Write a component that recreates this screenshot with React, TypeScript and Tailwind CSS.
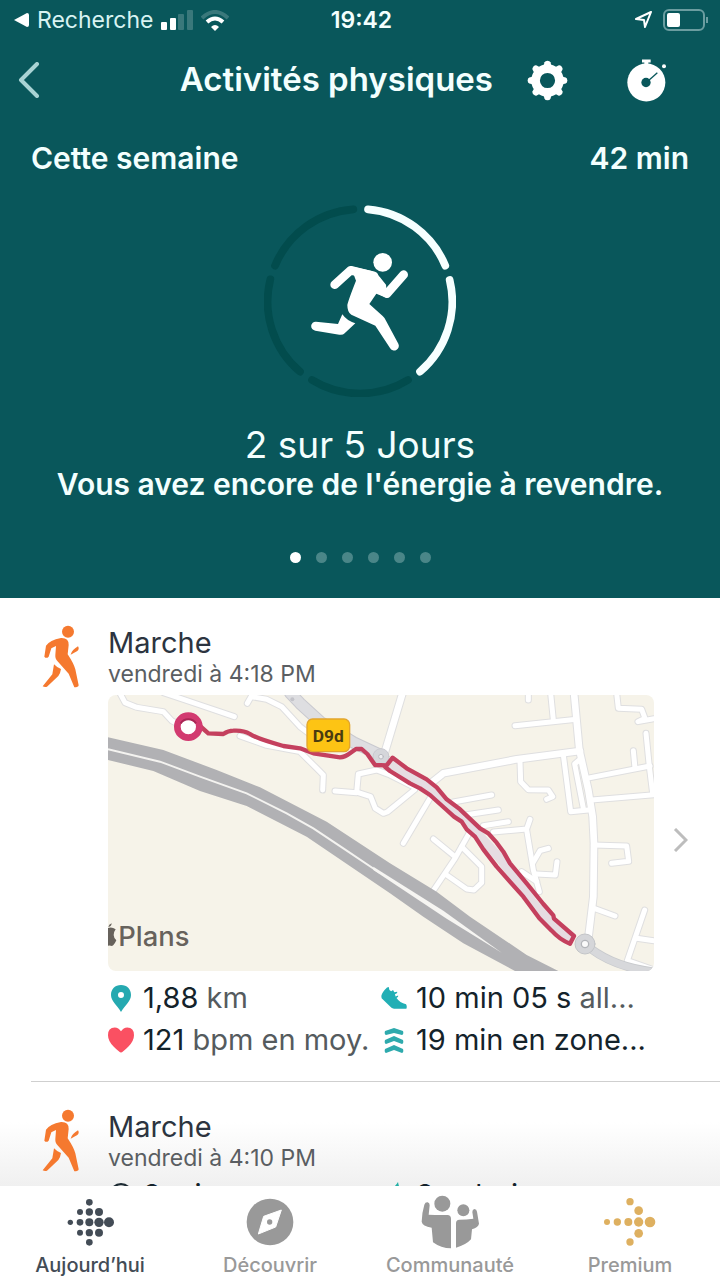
import type { ReactNode } from 'react'

const segments = [
  { d: 'M354 58A276 276 0 0 1 586 227', done: true },
  { d: 'M599 270A276 276 0 0 1 510 545', done: true },
  { d: 'M474 570A276 276 0 0 1 186 570', done: false },
  { d: 'M150 545A276 276 0 0 1 61 268', done: false },
  { d: 'M75 227A276 276 0 0 1 310 58', done: false }
]

const streets = [
  'M60 10L75 38L110 52L190 65L215 92L240 105',
  'M190 8L300 45L403 80',
  'M460 8L442 40',
  'M455 20L500 28L545 50L600 110L640 140',
  'M420 138L500 166L600 185L650 235L670 255L668 300',
  'M705 303L770 308L775 252L830 240L870 255L940 290',
  'M775 308L812 320L826 355L850 370L862 366L945 298',
  'M1245 107L1430 88',
  'M1352 10L1360 90',
  'M1285 10V30',
  'M1550 10L1555 55L1625 58L1635 85L1614 95L1662 86',
  'M1638 130L1648 230L1658 310',
  'M1460 265L1650 228',
  'M1600 182L1605 235',
  'M1475 330L1662 314',
  'M1390 195L1412 365L1465 360',
  'M1440 208L1424 222L1450 355',
  'M1260 215L1262 275L1285 299L1345 300L1358 320L1340 328',
  'M1060 336L1175 315',
  'M1100 374L1195 360',
  'M1150 407L1225 395',
  'M1180 426L1280 417L1290 388',
  'M1280 420L1300 540L1318 605',
  'M1298 520L1320 482L1345 475',
  'M1310 552L1366 555L1371 515',
  'M1265 545L1310 575',
  'M990 325L910 460',
  'M1000 447L1065 500',
  'M1110 425L1065 505L1000 602',
  'M1085 470L1145 530V578L1122 600L1100 597L1040 555',
  'M1480 465L1580 468L1586 514L1535 520',
  'M1482 655L1545 678',
  'M1634 660L1582 812L1662 840',
  'M1610 745L1662 752'
]

const avenues = [
  'M908 8L855 185',
  'M980 290L1030 250L1250 208L1440 183',
  'M1422 8L1438 180L1465 300L1478 380L1482 460L1480 620L1465 745'
]

const route =
  'M300 108L325 130L370 132Q385 122 400 122Q430 120 450 132Q470 146 550 168L600 175L640 190L720 202Q735 201 752 188L768 177L785 177L802 192L825 225L860 226L878 203L920 235L980 268L1010 292L1040 328L1080 358L1140 415L1165 430L1190 458L1210 485L1230 520L1280 580L1330 642L1360 676L1362 686L1422 738L1410 761Q1380 750 1355 722L1318 685L1270 620L1190 530L1150 478L1125 440L1100 418L1085 395L1062 380L1040 360L990 315L960 295L930 280L870 243L850 226'

const shieldRoad = 'M570 8L600 40L660 95L760 157L845 197'
const exitRoad = 'M1470 775Q1550 835 1670 846'

function RouteMap() {
  return (
    <svg viewBox="24 15 1638 828" role="img" aria-label="Plans" className="block w-full rounded-lg bg-[#f6f3e9]">
      <g fill="none" strokeLinecap="round" strokeLinejoin="round">
        <g stroke="#dfdfe0">
          {streets.map((d) => <path key={d} d={d} strokeWidth="21" />)}
          {avenues.map((d) => <path key={d} d={d} strokeWidth="26" />)}
        </g>
        <path d={shieldRoad} stroke="#c9c9cf" strokeWidth="37" />
        <g stroke="#fff">
          {streets.map((d) => <path key={d} d={d} strokeWidth="15" />)}
          {avenues.map((d) => <path key={d} d={d} strokeWidth="20" />)}
        </g>
        <path d={shieldRoad} stroke="#dedee1" strokeWidth="31" />
        <circle cx="843" cy="200" r="24" fill="#d5d6da" stroke="#c9c9cf" strokeWidth="3" />
        <circle cx="843" cy="200" r="7" fill="#eeeef0" stroke="#b9bac0" strokeWidth="3" />
        <circle cx="577" cy="28" r="6" fill="#c3c3c9" />
        <path d={exitRoad} stroke="#c8cacd" strokeWidth="26" />
        <path d={exitRoad} stroke="#d7d8db" strokeWidth="21" />
        <circle cx="1455" cy="762" r="30" fill="#d5d6d9" stroke="#c3c5c8" strokeWidth="3" />
        <circle cx="1455" cy="762" r="11" fill="#fafafa" stroke="#b4b6ba" strokeWidth="4" />
        <path d="M875 225L980 292L1100 395L1200 505L1300 640L1405 745" stroke="#e6dde2" strokeWidth="28" />
      </g>
      <path
        d="M24 142L190 180L350 240L480 292L680 395L870 520L1010 605L1110 680L1280 795L1375 843H1245L1090 760L970 680L870 610L620 440L440 348L300 303L160 243L24 210Z"
        fill="#b1b1b4"
      />
      <path
        d="M24 178L180 215L300 260L440 310L560 370L640 415L730 475L840 549"
        fill="none"
        stroke="#f4f3f0"
        strokeWidth="6"
      />
      <path d="M820 530L1030 662L1205 788L1040 686L820 540Z" fill="#f6f5f2" />
      <path d={route} fill="none" stroke="#c4405e" strokeWidth="13" strokeLinejoin="round" />
      <circle cx="265" cy="110" r="33" fill="#fff" stroke="#d23a70" strokeWidth="20" />
      <path d="M242 100A28 28 0 0 1 288 100" fill="none" stroke="#a92655" strokeWidth="6" />
      <rect x="621" y="87" width="128" height="98" rx="17" fill="#fdc414" stroke="#e2a52c" strokeWidth="4" />
      <text
        x="685"
        y="156"
        textAnchor="middle"
        fontSize="52"
        fontWeight="700"
        className="fill-[#4a3c10] font-['Liberation_Sans_Narrow','Roboto',sans-serif]"
      >
        D9d
      </text>
      <g fill="#67625c">
        <path d="M24 714Q36 710 47 718Q41 726 41 735Q42 747 49 751Q43 765 36 768Q30 766 24 767Z" />
        <path d="M25 711Q26 703 35 700Q35 709 25 711Z" />
        <text x="55" y="767" fontSize="82" fontWeight="500" className="font-['Inter',sans-serif]">
          Plans
        </text>
      </g>
    </svg>
  )
}

function Walker() {
  return (
    <svg viewBox="127 75 114 189" className="h-[63px] w-[38px] shrink-0 fill-[#f5792f]" aria-hidden="true">
      <circle cx="205" cy="95" r="18" />
      <path d="M139 137Q150 121 184 114Q208 113 207 135L204 163Q222 190 227 208L237 256Q236 262 224 262L207 221L175 185Q166 178 167 165L169 138L155 145L147 170Q140 177 134 170Z" />
      <path d="M235 139Q240 147 233 153L213 164Q216 150 235 139Z" />
      <path d="M163 193Q171 202 184 207Q182 221 176 228L142 260Q136 263 129 259L158 223Z" />
    </svg>
  )
}

function Pin() {
  return (
    <svg viewBox="0 0 20 27" className="h-[27px] w-5 fill-[#25a9b0]" aria-hidden="true">
      <path fillRule="evenodd" d="M10 0C4 0 0 4 0 10C0 16 6 20 10 27C14 20 20 16 20 10C20 4 16 0 10 0ZM10 7a3 3 0 1 1 0 6a3 3 0 1 1 0-6Z" />
    </svg>
  )
}

function Heart() {
  return (
    <svg viewBox="0 0 27 26" className="h-[26px] w-[27px] fill-[#fa5062]" aria-hidden="true">
      <path d="M13.500 26Q12 26 6 20Q0 14 0 8Q0 0 7 0Q11 0 13.500 4Q16 0 20 0Q27 0 27 8Q27 14 21 20Q15 26 13.500 26Z" />
    </svg>
  )
}

function Shoe() {
  return (
    <svg viewBox="63 56 82 72" className="h-6 w-[27px] fill-[#22afb5]" aria-hidden="true">
      <path d="M64 86Q66 74 82 59L88 57Q87 68 95 71L101 67L105 74L114 72V76L107 80L109 87L117 84V88L112 92Q122 107 142 112Q146 118 143 126H104Q97 125 91 118L65 93Z" />
    </svg>
  )
}

function Zone() {
  return (
    <svg viewBox="0 0 20 25" className="h-[25px] w-5 fill-[#2eaaad]" aria-hidden="true">
      <path d="M1 3L10 0L19 3Q20 6 18 7L10 5L2 7Q0 6 1 3Z" />
      <path d="M1 12L10 8L19 12Q20 15 18 16L10 13L2 16Q0 15 1 12Z" />
      <path d="M1 21L10 17L19 21Q20 24 18 25L10 22L2 25Q0 24 1 21Z" />
    </svg>
  )
}

function Clock() {
  return (
    <svg viewBox="0 0 24 24" className="size-[26px] fill-none stroke-[#1d2b33] stroke-2" aria-hidden="true">
      <circle cx="12" cy="12" r="10" />
      <path d="M12 6v6l4 3" />
    </svg>
  )
}

function Flame() {
  return (
    <svg viewBox="0 0 24 26" className="h-[26px] w-6 fill-[#22afa5]" aria-hidden="true">
      <path d="M16 0Q17 6 20 10Q23 14 21 19Q18 26 12 26Q5 26 3 19Q2 13 7 9Q13 5 16 0Z" />
    </svg>
  )
}

function Stat({ icon, value, unit }: { icon: ReactNode; value: string; unit?: string }) {
  return (
    <li className="flex h-[42px] items-center gap-[9px] whitespace-nowrap text-[29px] text-[#14232b]">
      <span className="flex w-[26px] shrink-0 justify-center">{icon}</span>
      <span>
        {value}
        {unit && <span className="text-[#555b5e]"> {unit}</span>}
      </span>
    </li>
  )
}

function Activity({ date, map, children }: { date: string; map?: boolean; children: ReactNode }) {
  return (
    <li className="ml-[31px] flex border-b border-[#cfcfcf] pb-5 pl-[11px] pt-[27px]">
      <Walker />
      <div className="ml-7 min-w-0 flex-1">
        <h2 className="text-[29px] leading-[36px] text-[#2c3440]">Marche</h2>
        <p className="text-[23px] leading-[26px] text-[#5a5e62]">{date}</p>
        {map && (
          <div className="mt-2 mb-[6px]">
            <RouteMap />
          </div>
        )}
        <ul className="mt-[3px] grid grid-cols-2">{children}</ul>
      </div>
      <a href="#" aria-label={date} className="flex w-[66px] shrink-0 items-center pb-[6px] pl-[19px]">
        {map && (
          <svg viewBox="0 0 15 24" className="h-6 w-[15px] fill-none stroke-[#bdbdbd] stroke-3" aria-hidden="true">
            <path d="M2 1L13 12L2 23" />
          </svg>
        )}
      </a>
    </li>
  )
}

const todayDots = [
  [267, 337, 10], [239, 366, 9], [267, 366, 11], [296, 366, 12],
  [210, 397, 8], [239, 397, 10], [267, 397, 12], [296, 397, 14], [326, 397, 15],
  [239, 428, 9], [267, 428, 11], [296, 428, 12], [267, 457, 10]
]

const premiumDots = [
  [808, 336, 11], [834, 363, 13], [739, 397, 9], [770, 397, 11], [803, 397, 12],
  [834, 397, 14], [868, 397, 16], [834, 431, 13], [808, 457, 11]
]

const tabs = [
  {
    label: 'Aujourd’hui',
    color: 'text-[#434c56]',
    icon: (
      <svg viewBox="197 324 144 144" className="size-12 fill-current" aria-hidden="true">
        {todayDots.map(([x, y, r]) => <circle key={`${x}-${y}`} cx={x} cy={y} r={r} />)}
      </svg>
    )
  },
  {
    label: 'Découvrir',
    color: 'text-[#999999]',
    icon: (
      <svg viewBox="738 325 144 144" className="size-12 fill-current" aria-hidden="true">
        <circle cx="810" cy="397" r="70" />
        <path d="M844 361L827 412L775 433L791 380Z" fill="#fff" stroke="#fff" strokeWidth="3" strokeLinejoin="round" />
        <circle cx="809" cy="397" r="8" />
      </svg>
    )
  },
  {
    label: 'Communauté',
    color: 'text-[#999999]',
    icon: (
      <svg viewBox="183 316 177 162" className="h-[54px] w-[59px] fill-current" aria-hidden="true">
        <circle cx="247" cy="342" r="24" />
        <circle cx="310" cy="362" r="18" />
        <path d="M193 345Q196 337 203 338Q209 340 209 347L206 375Q235 377 262 376Q273 377 273 387V476Q243 476 219 458L215 414Q187 409 185 396Q186 368 193 345Z" />
        <path d="M288 474V401Q288 390 298 390Q320 390 340 387L337 367Q337 359 343 358Q350 358 351 366L357 402Q355 413 336 419L333 449Q318 466 288 474Z" />
      </svg>
    )
  },
  {
    label: 'Premium',
    color: 'text-[#999999]',
    icon: (
      <svg viewBox="730 325 159 144" className="h-12 w-[53px] fill-[#deb060]" aria-hidden="true">
        {premiumDots.map(([x, y, r]) => <circle key={`${x}-${y}`} cx={x} cy={y} r={r} />)}
      </svg>
    )
  }
]

function StatusBar() {
  return (
    <div className="grid h-10 grid-cols-[1fr_auto_1fr] items-center pl-[14px] pr-[11px] leading-10">
      <div className="flex items-center">
        <svg viewBox="0 0 15 14" className="h-[14px] w-[15px] fill-white" aria-hidden="true">
          <path d="M0 7L13 0Q15 0 15 2V12Q15 14 13 14Z" />
        </svg>
        <span className="ml-2 text-[23px] text-[#d8f3f2]">Recherche</span>
        <svg viewBox="0 0 32 20" className="ml-2 h-5 w-8 fill-white" aria-hidden="true">
          <rect y="12" width="6" height="8" rx="1" />
          <rect x="9" y="8" width="6" height="12" rx="1" />
          <rect x="17" y="4" width="6" height="16" rx="1" opacity=".2" />
          <rect x="26" width="6" height="20" rx="1" opacity=".2" />
        </svg>
        <svg viewBox="0 0 28 21" className="ml-2 h-[21px] w-7 fill-none stroke-white stroke-4" aria-hidden="true">
          <path d="M1 8Q14 -4 27 8" opacity=".2" />
          <path d="M6 12Q14 5 22 12" />
          <path d="M10 17Q14 13 18 17L14 21Z" className="fill-white stroke-none" />
        </svg>
      </div>
      <time className="text-[23px] font-semibold">19:42</time>
      <div className="flex items-center justify-end">
        <svg viewBox="0 0 18 18" className="h-[18px] w-[18px] fill-none stroke-white stroke-2" aria-hidden="true">
          <path d="M16 1L1 8L9 9L10 16Z" strokeLinejoin="round" />
        </svg>
        <svg viewBox="0 0 46 22" className="ml-[10px] h-[22px] w-[46px] fill-none stroke-[#6b9da0] stroke-2" aria-hidden="true">
          <rect x="1" y="1" width="40" height="20" rx="5" />
          <rect x="4" y="4" width="13" height="14" rx="2" className="fill-white stroke-none" />
          <path d="M44 8V14" />
        </svg>
      </div>
    </div>
  )
}

export default function App() {
  return (
    <div className="flex h-screen flex-col overflow-hidden bg-white font-['Inter',sans-serif]">
      <header className="shrink-0 bg-[#09575b] text-[#f3fffe]">
        <StatusBar />
        <div className="flex h-20 items-center pl-[18px] pr-[53px]">
          <button type="button" aria-label="Retour">
            <svg viewBox="0 0 22 36" className="h-9 w-[22px] fill-none stroke-[#a9d3d4] stroke-4" aria-hidden="true">
              <path d="M19 2L3 18L19 34" strokeLinecap="round" strokeLinejoin="round" />
            </svg>
          </button>
          <h1 className="flex-1 pr-[34px] text-right text-[33px] font-semibold">Activités physiques</h1>
          <button type="button" aria-label="Réglages">
            <svg viewBox="500 180 124 124" className="size-[41px] fill-white" aria-hidden="true">
              <circle cx="562" cy="242" r="36" fill="none" stroke="#fff" strokeWidth="26" />
              {[0, 45, 90, 135, 180, 225, 270, 315].map((angle) => (
                <path key={angle} d="M549 202L553 187Q555 182 562 182Q569 182 571 187L575 202Z" transform={`rotate(${angle} 562 242)`} />
              ))}
            </svg>
          </button>
          <button type="button" aria-label="Chronomètre" className="ml-[59px]">
            <svg viewBox="802 178 120 128" className="h-[43px] w-10 fill-white" aria-hidden="true">
              <circle cx="860" cy="248" r="57" />
              <path d="M847 179H873V188H866V198H854V188H847Z" />
              <circle cx="913" cy="199" r="6" />
              <circle cx="859" cy="248" r="14" className="fill-[#09575b]" />
              <path d="M860 248L893 219" className="stroke-[#09575b] stroke-4" />
            </svg>
          </button>
        </div>
        <div className="mt-5 flex justify-between px-[31px] text-[30px] font-semibold leading-9">
          <span>Cette semaine</span>
          <span>42 min</span>
        </div>
        <section className="flex flex-col items-center">
          <svg viewBox="42 45 576 576" className="mt-[29px] size-48 fill-white" aria-hidden="true">
            <g fill="none" strokeWidth="23" strokeLinecap="round">
              {segments.map(({ d, done }) => (
                <path key={d} d={d} className={done ? 'stroke-[#f6ffff]' : 'stroke-[#024c4d]'} />
              ))}
            </g>
            <circle cx="398" cy="217" r="28" />
            <path d="M254 284L302 241L372 258M461 254L411 311L375 292" fill="none" stroke="#fff" strokeWidth="26" strokeLinecap="round" strokeLinejoin="round" />
            <path d="M302 229L365 243Q380 248 390 262L408 284L412 324L379 311L358 342L398 378Q404 383 408 392L445 461A14 14 0 0 1 420 474L376 407L304 374Q292 367 292 345Q295 330 318 272Z" />
            <path d="M198 395L264 402L277 373Q290 392 316 400L284 430Q278 436 268 434L196 422A13 13 0 0 1 198 395Z" />
          </svg>
          <p className="mt-[27px] text-[37px] leading-[42px]">2 sur 5 Jours</p>
          <p className="text-[30px] font-semibold leading-9">Vous avez encore de l'énergie à revendre.</p>
          <div className="mt-[50px] mb-[35px] flex gap-[15px]">
            {[0, 1, 2, 3, 4, 5].map((i) => (
              <span key={i} className={`size-[11px] rounded-full ${i === 0 ? 'bg-white' : 'bg-[#4a8688]'}`} />
            ))}
          </div>
        </section>
      </header>

      <main className="relative min-h-0 flex-1 overflow-hidden">
        <div className="absolute inset-x-0 bottom-0 h-16 bg-linear-to-b from-white to-[#f0f0f0]" />
        <ul className="relative">
          <Activity date="vendredi à 4:18 PM" map>
            <Stat icon={<Pin />} value="1,88" unit="km" />
            <Stat icon={<Shoe />} value="10 min 05 s" unit="all..." />
            <Stat icon={<Heart />} value="121" unit="bpm en moy." />
            <Stat icon={<Zone />} value="19 min en zone..." />
          </Activity>
          <Activity date="vendredi à 4:10 PM">
            <Stat icon={<Clock />} value="8 min" />
            <Stat icon={<Flame />} value="8 calories" />
          </Activity>
        </ul>
      </main>

      <nav className="grid shrink-0 grid-cols-4 bg-white pt-2">
        {tabs.map(({ label, color, icon }) => (
          <button key={label} type="button" className={`flex flex-col items-center ${color}`}>
            <span className="flex h-14 items-center">{icon}</span>
            <span className="text-[20px] font-medium leading-[30px]">{label}</span>
          </button>
        ))}
      </nav>
    </div>
  )
}
